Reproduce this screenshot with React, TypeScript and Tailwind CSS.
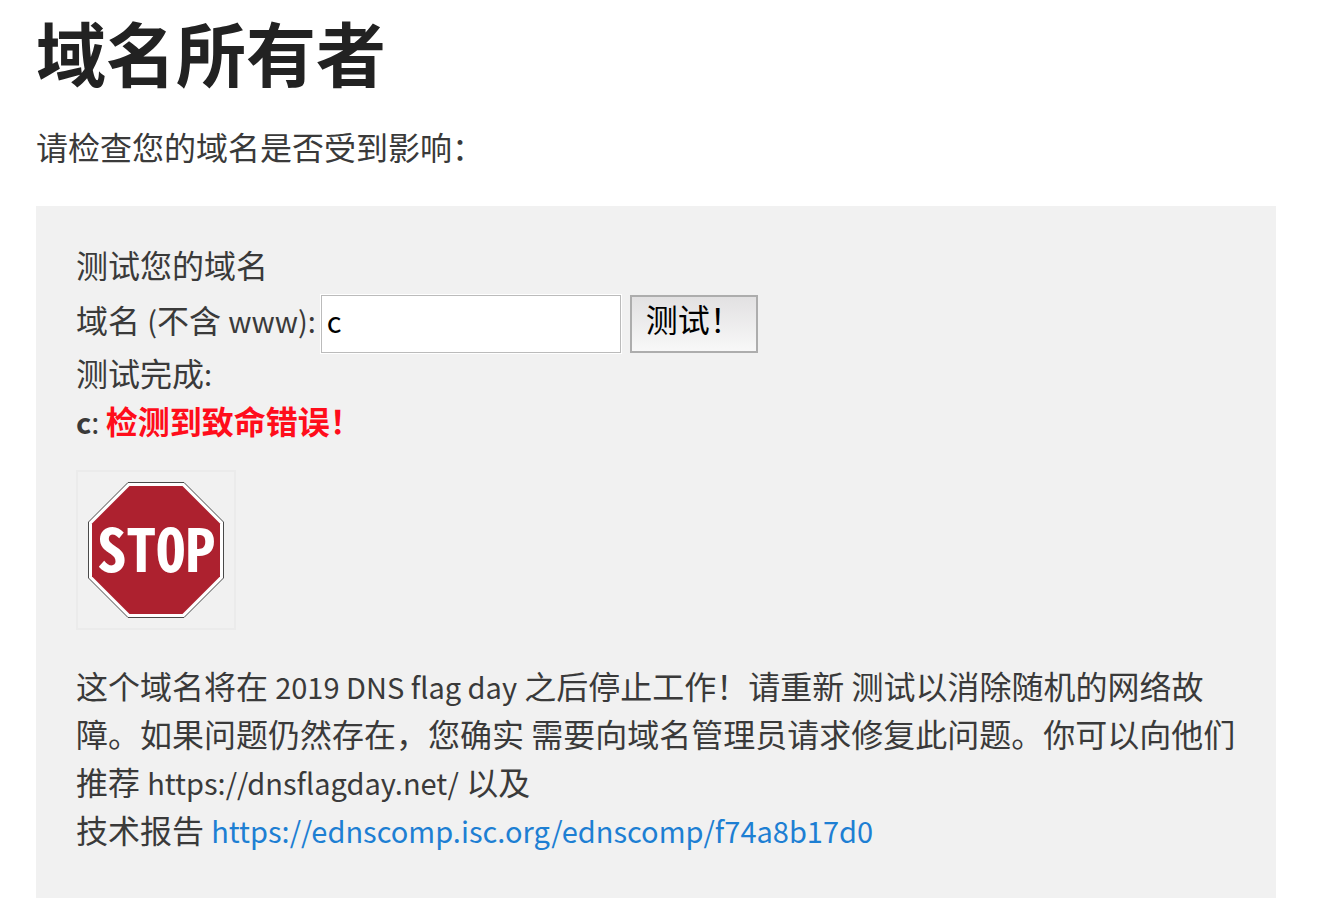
import { useState, type ReactNode } from "react";

function StopSign() {
  return (
    <svg
      viewBox="0 0 136 136"
      className="block size-[136px]"
      role="img"
      aria-label="STOP"
    >
      <polygon
        points="40,0.5 96,0.5 135.5,40 135.5,96 96,135.5 40,135.5 0.5,96 0.5,40"
        fill="#ffffff"
        stroke="#4a4a4a"
        strokeWidth="1"
      />
      <polygon
        points="41.5,4 94.5,4 132,41.5 132,94.5 94.5,132 41.5,132 4,94.5 4,41.5"
        fill="#ad212f"
      />
      <text
        x="68"
        y="90"
        textAnchor="middle"
        fill="#ffffff"
        className="font-['Noto_Sans_Mono_CJK_SC','Noto_Sans_CJK_SC',sans-serif] text-[59px] font-bold"
      >
        STOP
      </text>
    </svg>
  );
}

/* Latin runs are set a little smaller than the Chinese text around them. */
function Latin({ children }: { children: ReactNode }) {
  return <span className="text-[29px] leading-none">{children}</span>;
}

export default function App() {
  const [domain, setDomain] = useState("c");

  return (
    <main
      lang="zh-CN"
      className="bg-white pr-11 pb-5 pl-9 font-['Noto_Sans_CJK_SC',sans-serif] text-[32px] leading-[48px] text-[#3a3a3a]"
    >
      <h1 className="pt-[10px] text-[70px] leading-[84px] font-bold text-[#222222]">
        域名所有者
      </h1>
      <p className="pt-7">请检查您的域名是否受到影响：</p>

      <section className="mt-9 bg-[#f1f1f1] px-10 pt-[34px] pb-[45px]">
        <p>测试您的域名</p>
        <form
          className="-mb-[5px] flex items-center pt-[7px]"
          onSubmit={(event) => event.preventDefault()}
        >
          <label htmlFor="domain" className="mr-[5px] pb-[10px]">
            域名 <Latin>(</Latin>不含 <Latin>www):</Latin>
          </label>
          <input
            id="domain"
            type="text"
            value={domain}
            onChange={(event) => setDomain(event.target.value)}
            className="h-[58px] w-[300px] border border-[#bbbbbb] bg-white px-[5px] pb-2 text-[29px] text-black outline-1 outline-white"
          />
          <button
            type="submit"
            className="ml-[9px] h-[58px] border-2 border-[#adadad] bg-linear-to-b from-[#e2e1e2] to-[#f8f8f8] px-[14px] pb-3 leading-[42px] text-black"
          >
            测试！
          </button>
        </form>
        <p>
          测试完成<Latin>:</Latin>
        </p>
        <p>
          <Latin>
            <b>c</b>:{" "}
          </Latin>
          <b className="text-[#ff0d1b]">检测到致命错误！</b>
        </p>

        <div className="mt-[26px] w-fit border-2 border-[#ebebeb] p-[10px]">
          <StopSign />
        </div>

        <p className="mt-[31px]">
          这个域名将在 <Latin>2019 DNS flag day</Latin>{" "}
          之后停止工作！请重新 测试以消除随机的网络故障。如果问题仍然存在，您确实
          需要向域名管理员请求修复此问题。你可以向他们推荐{" "}
          <Latin>https://dnsflagday.net/</Latin> 以及
          <br />
          技术报告{" "}
          <a
            href="https://ednscomp.isc.org/ednscomp/f74a8b17d0"
            className="text-[#1d7fd3]"
          >
            <Latin>https://ednscomp.isc.org/ednscomp/f74a8b17d0</Latin>
          </a>
        </p>
      </section>
    </main>
  );
}
